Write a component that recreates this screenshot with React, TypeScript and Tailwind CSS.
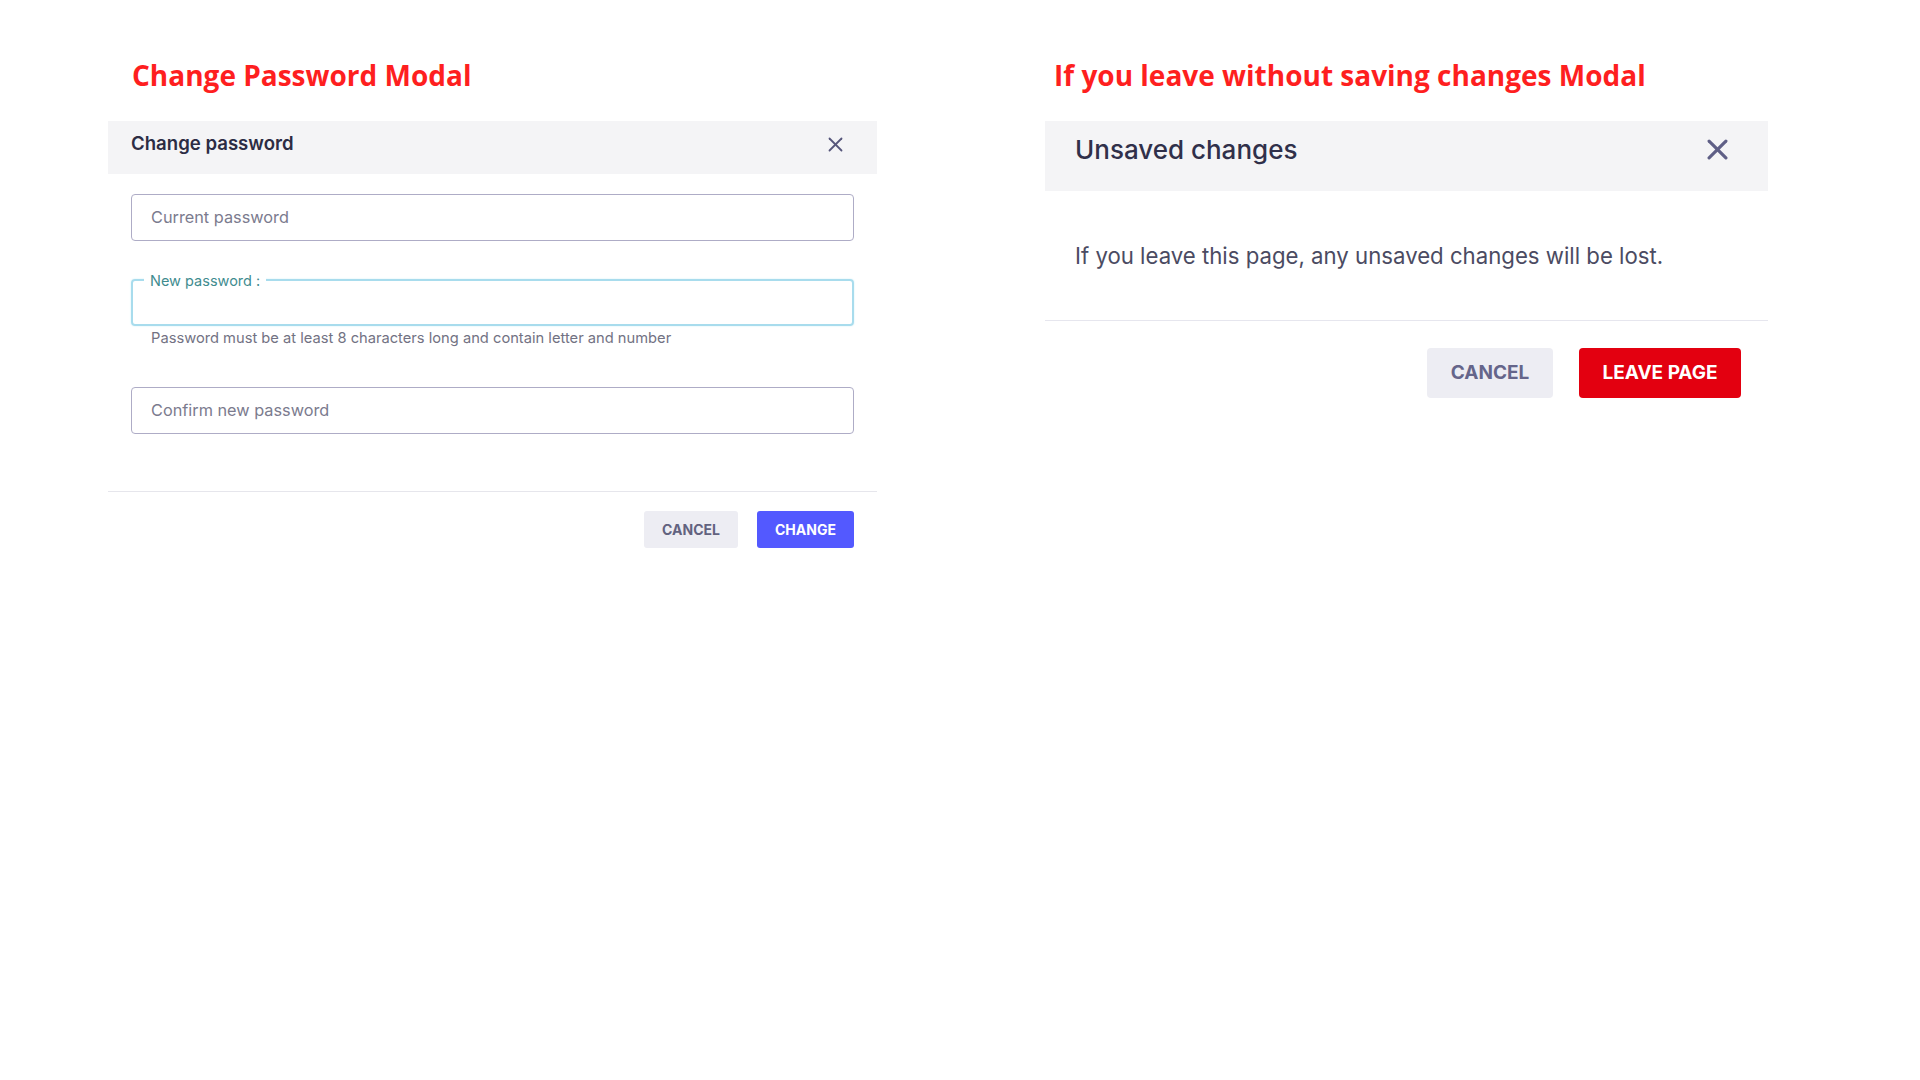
const CloseIcon = ({ size, stroke }: { size: number; stroke: number }) => (
  <svg width={size} height={size} viewBox="0 0 20 20" fill="none" stroke="currentColor" strokeWidth={stroke} strokeLinecap="round">
    <path d="M2 2 L18 18" />
    <path d="M18 2 L2 18" />
  </svg>
);

const ChangePasswordModal = () => {
  return (
    <div className="w-[769px] bg-white">
      <div className="flex h-[53px] items-center justify-between bg-[#f4f4f6] pb-[7px] pl-[23px] pr-[34px]">
        <span className="text-[18.6px] font-semibold text-[#2c2c44]">Change password</span>
        <span className="text-[#55557a]">
          <CloseIcon size={15} stroke={2.4} />
        </span>
      </div>

      <div className="flex flex-col px-[23px] pt-[20px]">
        <div className="flex h-[47px] items-center rounded-[4px] border border-[#aeacc6] pl-[19px]">
          <span className="text-[16.3px] text-[#7b7b8e]">Current password</span>
        </div>

        <div className="relative mt-[38px] h-[47px] rounded-[4px] border-2 border-[#a8dced] shadow-[0_0_2px_#cdeef7]">
          <span className="absolute left-[11px] top-0 -translate-y-1/2 bg-white px-[6px] text-[14.5px] leading-[16px] text-[#3f8c8f]">
            New password :
          </span>
        </div>
        <p className="mt-[3px] pl-[20px] text-[14.7px] leading-[18px] text-[#727283]">
          Password must be at least 8 characters long and contain letter and number
        </p>

        <div className="mt-[40px] flex h-[47px] items-center rounded-[4px] border border-[#aeacc6] pl-[19px]">
          <span className="text-[16.3px] text-[#7b7b8e]">Confirm new password</span>
        </div>
      </div>

      <div className="mt-[57px] border-t border-[#e6e6ec]" />

      <div className="flex justify-end gap-[19px] pr-[23px] pt-[19px]">
        <button className="h-[37px] w-[94px] rounded-[3px] bg-[#ededf3] text-[14px] font-bold text-[#62627f]">
          CANCEL
        </button>
        <button className="h-[37px] w-[97px] rounded-[3px] bg-[#5359ff] text-[14px] font-bold text-white">
          CHANGE
        </button>
      </div>
    </div>
  );
};

const UnsavedChangesModal = () => {
  return (
    <div className="w-[723px] bg-white">
      <div className="flex h-[70px] items-center justify-between bg-[#f4f4f6] pb-[13px] pl-[30px] pr-[40px]">
        <span className="text-[26px] font-medium text-[#30304a]">Unsaved changes</span>
        <span className="text-[#5f5f86]">
          <CloseIcon size={21} stroke={3} />
        </span>
      </div>

      <p className="pl-[30px] pt-[50px] text-[22.2px] leading-[30px] text-[#4b4b62]">
        If you leave this page, any unsaved changes will be lost.
      </p>

      <div className="mt-[49px] border-t border-[#e6e6ee]" />

      <div className="flex justify-end gap-[26px] pr-[27px] pt-[27px]">
        <button className="h-[50px] w-[126px] rounded-[4px] bg-[#ededf3] text-[19px] font-bold text-[#65658a]">
          CANCEL
        </button>
        <button className="h-[50px] w-[162px] rounded-[4px] bg-[#e30010] text-[19px] font-bold text-white">
          LEAVE PAGE
        </button>
      </div>
    </div>
  );
};

export default function App() {
  return (
    <div className="flex h-screen w-full items-start bg-white pl-[108px] pt-[57px] font-['Inter',sans-serif]">
      <section className="flex flex-col">
        <h1 className="pl-[24px] font-['Open_Sans',sans-serif] text-[28px] font-bold leading-[36px] text-[#fe1f1f]">
          Change Password Modal
        </h1>
        <div className="mt-[28px]">
          <ChangePasswordModal />
        </div>
      </section>

      <section className="ml-[168px] flex flex-col">
        <h1 className="pl-[9px] font-['Open_Sans',sans-serif] text-[28px] font-bold leading-[36px] text-[#fe1f1f]">
          If you leave without saving changes Modal
        </h1>
        <div className="mt-[28px]">
          <UnsavedChangesModal />
        </div>
      </section>
    </div>
  );
}
